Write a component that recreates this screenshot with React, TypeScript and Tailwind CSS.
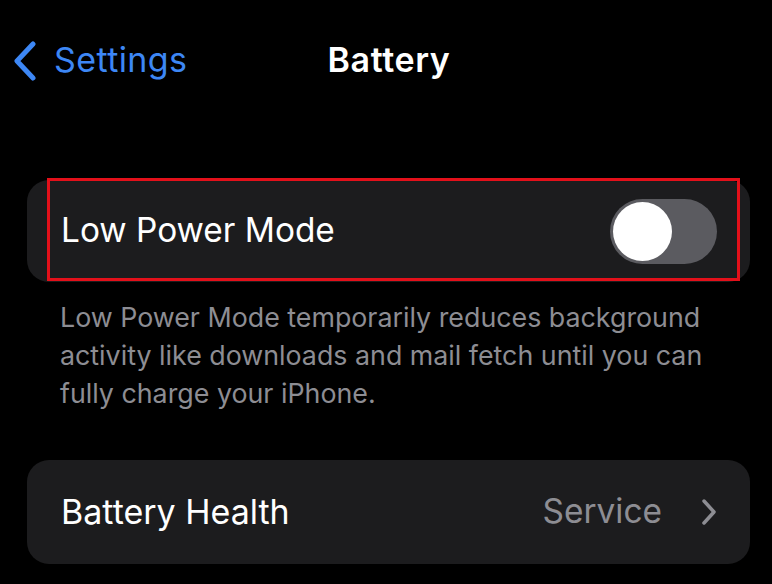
import React from "react";

export default function App() {
  return (
    <div
      className="w-[772px] h-[584px] bg-black overflow-hidden text-white"
      style={{ fontFamily: "Inter, 'Noto Sans', sans-serif" }}
    >
      {/* Nav bar */}
      <div className="relative h-[120px] flex items-start pt-[38px]">
        <div className="flex items-center pl-[12px]">
          <svg width="26" height="40" viewBox="0 0 26 40" className="mt-[2px]">
            <path
              d="M21 3 L5 20 L21 37"
              fill="none"
              stroke="#3d87f5"
              strokeWidth="5"
              strokeLinecap="round"
              strokeLinejoin="round"
            />
          </svg>
          <span className="ml-[16px] text-[34px] leading-[44px] text-[#3d87f5] tracking-[0.4px]">
            Settings
          </span>
        </div>
        <div className="absolute left-0 right-0 top-[38px] flex justify-center">
          <span className="text-[34px] leading-[44px] font-semibold pl-[6px] tracking-[0.6px]">Battery</span>
        </div>
      </div>

      {/* Low Power Mode card */}
      <div className="mx-[27px] w-[723px] mt-[60px] h-[102px] rounded-[22px] bg-[#1c1c1e] relative flex items-center">
        <div className="absolute left-[20px] top-[-2px] w-[693px] h-[103px] border-[3px] border-[#e3101a]" />
        <span className="ml-[34px] text-[33.4px] leading-none">Low Power Mode</span>
        <div className="ml-auto mr-[33px] w-[107px] h-[65px] rounded-full bg-[#5b5b60] p-[3px] flex items-center">
          <div className="w-[59px] h-[59px] rounded-full bg-white" />
        </div>
      </div>

      {/* Description */}
      <div className="ml-[60px] mt-[16px] w-[664px] text-[26.8px] leading-[38px] text-[#8d8d93]">
        Low Power Mode temporarily reduces background activity like downloads and mail fetch until you can fully charge your iPhone.
      </div>

      {/* Battery Health card */}
      <div className="mx-[27px] w-[723px] mt-[48px] h-[104px] rounded-[22px] bg-[#1c1c1e] flex items-center">
        <span className="ml-[34px] text-[34px] leading-none">Battery Health</span>
        <span className="ml-auto text-[33.4px] leading-none text-[#8d8d93]">Service</span>
        <svg width="18" height="28" viewBox="0 0 18 28" className="ml-[38px] mr-[32px]">
          <path
            d="M4 3 L14 14 L4 25"
            fill="none"
            stroke="#8d8d93"
            strokeWidth="3.5"
            strokeLinecap="round"
            strokeLinejoin="round"
          />
        </svg>
      </div>
    </div>
  );
}
